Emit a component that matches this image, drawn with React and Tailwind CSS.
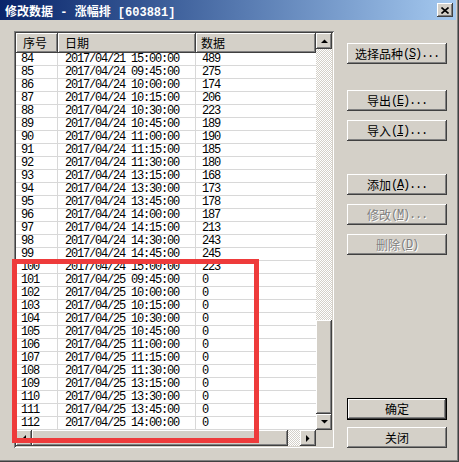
import React from "react";

const rows = [
  ["84", "2017/04/21 15:00:00", "489"],
  ["85", "2017/04/24 09:45:00", "275"],
  ["86", "2017/04/24 10:00:00", "174"],
  ["87", "2017/04/24 10:15:00", "206"],
  ["88", "2017/04/24 10:30:00", "223"],
  ["89", "2017/04/24 10:45:00", "189"],
  ["90", "2017/04/24 11:00:00", "190"],
  ["91", "2017/04/24 11:15:00", "185"],
  ["92", "2017/04/24 11:30:00", "180"],
  ["93", "2017/04/24 13:15:00", "168"],
  ["94", "2017/04/24 13:30:00", "173"],
  ["95", "2017/04/24 13:45:00", "178"],
  ["96", "2017/04/24 14:00:00", "187"],
  ["97", "2017/04/24 14:15:00", "213"],
  ["98", "2017/04/24 14:30:00", "243"],
  ["99", "2017/04/24 14:45:00", "245"],
  ["100", "2017/04/24 15:00:00", "223"],
  ["101", "2017/04/25 09:45:00", "0"],
  ["102", "2017/04/25 10:00:00", "0"],
  ["103", "2017/04/25 10:15:00", "0"],
  ["104", "2017/04/25 10:30:00", "0"],
  ["105", "2017/04/25 10:45:00", "0"],
  ["106", "2017/04/25 11:00:00", "0"],
  ["107", "2017/04/25 11:15:00", "0"],
  ["108", "2017/04/25 11:30:00", "0"],
  ["109", "2017/04/25 13:15:00", "0"],
  ["110", "2017/04/25 13:30:00", "0"],
  ["111", "2017/04/25 13:45:00", "0"],
  ["112", "2017/04/25 14:00:00", "0"],
];

const raised =
  "bg-[#d4d0c8] shadow-[inset_-1px_-1px_#404040,inset_1px_1px_#ffffff,inset_-2px_-2px_#808080,inset_2px_2px_#d4d0c8]";
const checker =
  "bg-[repeating-conic-gradient(#ffffff_0_25%,#d4d0c8_0_50%)] bg-[length:2px_2px]";
const mono = "font-['Liberation_Mono',monospace] text-[12px] tracking-[-1.2px]";
const cjk = "font-['Noto_Sans_CJK_SC',sans-serif] text-[12px]";

function Arrow({ dir }) {
  const pts = {
    up: "0,4 7,4 3.5,0.5",
    down: "0,0 7,0 3.5,3.5",
    left: "4,0 4,7 0.5,3.5",
    right: "0,0 0,7 3.5,3.5",
  }[dir];
  const vertical = dir === "up" || dir === "down";
  return (
    <div className={`w-[16px] h-[16px] flex items-center justify-center ${raised}`}>
      <svg width={vertical ? 7 : 4} height={vertical ? 4 : 7} viewBox={vertical ? "0 0 7 4" : "0 0 4 7"}>
        <polygon points={pts} fill="#000" />
      </svg>
    </div>
  );
}

function Btn({ label, hot, tail = "", disabled, def, className = "" }) {
  const shadow = def
    ? "bg-[#d4d0c8] shadow-[inset_0_0_0_1px_#000000,inset_-2px_-2px_#404040,inset_2px_2px_#ffffff,inset_-3px_-3px_#808080]"
    : raised;
  const color = disabled
    ? "text-[#808080] [text-shadow:1px_1px_0_#ffffff]"
    : "text-black";
  return (
    <div className={`w-[100px] h-[21px] flex items-center justify-center leading-none ${shadow} ${color} ${className}`}>
      <span className={cjk}>{label}</span>
      {hot && (
        <span className={mono}>
          (<span className="underline">{hot}</span>){tail}
        </span>
      )}
    </div>
  );
}

export default function App() {
  return (
    <div className="w-[459px] h-[462px] bg-[#d4d0c8] relative overflow-hidden flex flex-col shadow-[inset_-1px_-1px_#404040,inset_-2px_-2px_#808080]">
      {/* title bar */}
      <div className="h-[20px] w-[456px] bg-linear-to-r from-[#0a246a] to-[#a6caf0] flex items-center pl-[5px] shrink-0">
        <span className="text-white font-bold leading-none whitespace-pre">
          <span className={cjk}>修改数据</span>
          <span className="font-['Liberation_Mono',monospace] text-[12px]"> - </span>
          <span className={cjk}>涨幅排</span>
          <span className="font-['Liberation_Mono',monospace] text-[12px]"> [603881]</span>
        </span>
        <div className={`ml-auto mr-[3px] w-[16px] h-[14px] flex items-center justify-center ${raised}`}>
          <svg width="8" height="7" viewBox="0 0 8 7">
            <path d="M0.5 0.5 L7.5 6.5 M7.5 0.5 L0.5 6.5" stroke="#000" strokeWidth="1.6" />
          </svg>
        </div>
      </div>

      <div className="flex">
        {/* list frame */}
        <div className="ml-[14px] mt-[11px] w-[320px] h-[417px] p-[2px] shadow-[inset_1px_1px_#808080,inset_-1px_-1px_#ffffff,inset_2px_2px_#404040,inset_-2px_-2px_#d4d0c8]">
          <div className="flex w-[316px] h-[413px]">
            <div className="flex flex-col w-[300px]">
              {/* header */}
              <div className="flex h-[20px] shrink-0">
                <div className={`w-[42px] h-full flex items-center pl-[7px] ${raised} ${cjk}`}>序号</div>
                <div className={`w-[138px] h-full flex items-center pl-[7px] ${raised} ${cjk}`}>日期</div>
                <div className={`w-[120px] h-full flex items-center pl-[5px] ${raised} ${cjk}`}>数据</div>
              </div>
              {/* rows */}
              <div className="h-[377px] bg-white overflow-hidden">
                {rows.map((r) => (
                  <div key={r[0]} className={`flex h-[13px] border-b border-[#d8d8d8] leading-[13px] text-black ${mono}`}>
                    <div className="w-[42px] pl-[5px] border-r border-[#d8d8d8]">{r[0]}</div>
                    <div className="w-[138px] pl-[7px] border-r border-[#d8d8d8] whitespace-pre">{r[1]}</div>
                    <div className="w-[120px] pl-[6px]">{r[2]}</div>
                  </div>
                ))}
              </div>
              {/* horizontal scrollbar */}
              <div className="flex h-[16px] shrink-0">
                <Arrow dir="left" />
                <div className={`w-[256px] h-full ${raised}`} />
                <div className={`w-[12px] h-full ${checker}`} />
                <Arrow dir="right" />
              </div>
            </div>
            {/* vertical scrollbar */}
            <div className="flex flex-col w-[16px]">
              <Arrow dir="up" />
              <div className={`h-[271px] ${checker}`} />
              <div className={`h-[94px] ${raised}`} />
              <Arrow dir="down" />
              <div className="h-[16px] bg-[#d4d0c8]" />
            </div>
          </div>
        </div>

        {/* buttons */}
        <div className="ml-[13px] mt-[23px] flex flex-col">
          <Btn label="选择品种" hot="S" tail="..." />
          <Btn label="导出" hot="E" tail="..." className="mt-[26px]" />
          <Btn label="导入" hot="I" tail="..." className="mt-[9px]" />
          <Btn label="添加" hot="A" tail="..." className="mt-[33px]" />
          <Btn label="修改" hot="M" tail="..." disabled className="mt-[9px]" />
          <Btn label="删除" hot="D" disabled className="mt-[9px]" />
          <Btn label="确定" def className="mt-[143px] h-[22px]" />
          <Btn label="关闭" className="mt-[7px]" />
        </div>
      </div>

      {/* red annotation box */}
      <div className="absolute left-[12px] top-[259px] w-[247px] h-[184px] border-[5px] border-[#ee3b3b]" />
    </div>
  );
}
